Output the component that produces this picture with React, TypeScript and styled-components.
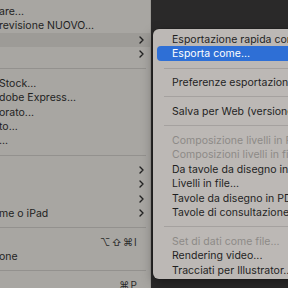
import styled, { createGlobalStyle } from "styled-components";

const GlobalStyle = createGlobalStyle`
  html, body {
    margin: 0;
    padding: 0;
    width: 288px;
    height: 288px;
    overflow: hidden;
    background: #2a2929;
  }
  body {
    font-family: Inter, "Liberation Sans", sans-serif;
    -webkit-font-smoothing: antialiased;
  }
`;

const ROW = 14.45;

const SScreen = styled.div`
  position: relative;
  width: 288px;
  height: 288px;
  overflow: hidden;
  display: flex;
`;

const SMainMenu = styled.div`
  width: 151px;
  height: 288px;
  background: #a8a6a2;
  padding-top: 3.8px;
  box-sizing: border-box;
  border-right: 1px solid #9b9995;
  flex-shrink: 0;
`;

const SSubMenu = styled.div`
  position: absolute;
  left: 153px;
  top: 29px;
  width: 190px;
  padding: 3px 0 2px;
  background: #bcb8b5;
  border-radius: 6px;
  box-shadow: 0 0 0 0.5px rgba(0, 0, 0, 0.25), 0 4px 12px rgba(0, 0, 0, 0.35);
`;

const SRow = styled.div<{ $active?: boolean; $disabled?: boolean }>`
  display: flex;
  align-items: center;
  height: ${ROW}px;
  font-size: 10.5px;
  letter-spacing: 0.02px;
  white-space: nowrap;
  color: ${({ $disabled }) => ($disabled ? "#8b8885" : "#1f1f1f")};
  background: ${({ $active }) => ($active ? "#9d9b97" : "transparent")};
`;

const SMainLabel = styled.span`
  flex: 1;
  margin-left: -1px;
`;

const SShortcut = styled.span`
  margin-right: 12px;
  font-size: 10px;
  letter-spacing: 1.2px;
  color: #2a2a2a;
`;

const SChevron = styled.svg`
  width: 5px;
  height: 8px;
  margin-right: 6px;
`;

const SSubRow = styled(SRow)`
  margin: 0 0 0 4px;
  padding-left: 15px;
  border-radius: 4px;
  background: ${({ $active }) => ($active ? "#2e6fd6" : "transparent")};
  color: ${({ $active, $disabled }) =>
    $active ? "#ffffff" : $disabled ? "#8d8a87" : "#1f1f1f"};
`;

const SSeparator = styled.div<{ $inset?: number }>`
  height: ${ROW}px;
  display: flex;
  align-items: center;
  padding-left: ${({ $inset }) => $inset ?? 0}px;
  padding-right: 4px;

  &::after {
    content: "";
    flex: 1;
    height: 1px;
    background: rgba(0, 0, 0, 0.12);
  }
`;

function Chevron() {
  return (
    <SChevron viewBox="0 0 5 8">
      <path
        d="M1 1 L4 4 L1 7"
        fill="none"
        stroke="#222"
        strokeWidth="1.4"
        strokeLinecap="round"
        strokeLinejoin="round"
      />
    </SChevron>
  );
}

type MainItem =
  | { sep: true }
  | { label: string; sub?: boolean; active?: boolean; shortcut?: string };

const mainItems: MainItem[] = [
  { label: "are..." },
  { label: "revisione NUOVO..." },
  { label: "", sub: true, active: true },
  { label: "", sub: true },
  { sep: true },
  { label: "Stock..." },
  { label: "dobe Express..." },
  { label: "orato..." },
  { label: "to..." },
  { label: "..." },
  { sep: true },
  { label: "", sub: true },
  { label: "", sub: true },
  { label: "", sub: true },
  { label: "me o iPad", sub: true },
  { sep: true },
  { label: "", shortcut: "⌥⇧⌘I" },
  { label: "one" },
  { sep: true },
  { label: "", shortcut: "⌘P" },
];

type SubItem = { sep: true } | { label: string; active?: boolean; disabled?: boolean };

const subItems: SubItem[] = [
  { label: "Esportazione rapida come PNG" },
  { label: "Esporta come...", active: true },
  { sep: true },
  { label: "Preferenze esportazione..." },
  { sep: true },
  { label: "Salva per Web (versione precedente)..." },
  { sep: true },
  { label: "Composizione livelli in PDF...", disabled: true },
  { label: "Composizioni livelli in file...", disabled: true },
  { label: "Da tavole da disegno in file..." },
  { label: "Livelli in file..." },
  { label: "Tavole da disegno in PDF..." },
  { label: "Tavole di consultazione colore..." },
  { sep: true },
  { label: "Set di dati come file...", disabled: true },
  { label: "Rendering video..." },
  { label: "Tracciati per Illustrator..." },
];

export default function App() {
  return (
    <>
      <GlobalStyle />
      <SScreen>
        <SMainMenu>
          {mainItems.map((item, i) =>
            "sep" in item ? (
              <SSeparator key={i} />
            ) : (
              <SRow key={i} $active={item.active}>
                <SMainLabel>{item.label}</SMainLabel>
                {item.shortcut && <SShortcut>{item.shortcut}</SShortcut>}
                {item.sub && <Chevron />}
              </SRow>
            )
          )}
        </SMainMenu>
        <SSubMenu>
          {subItems.map((item, i) =>
            "sep" in item ? (
              <SSeparator key={i} $inset={11} />
            ) : (
              <SSubRow key={i} $active={item.active} $disabled={item.disabled}>
                {item.label}
              </SSubRow>
            )
          )}
        </SSubMenu>
      </SScreen>
    </>
  );
}
